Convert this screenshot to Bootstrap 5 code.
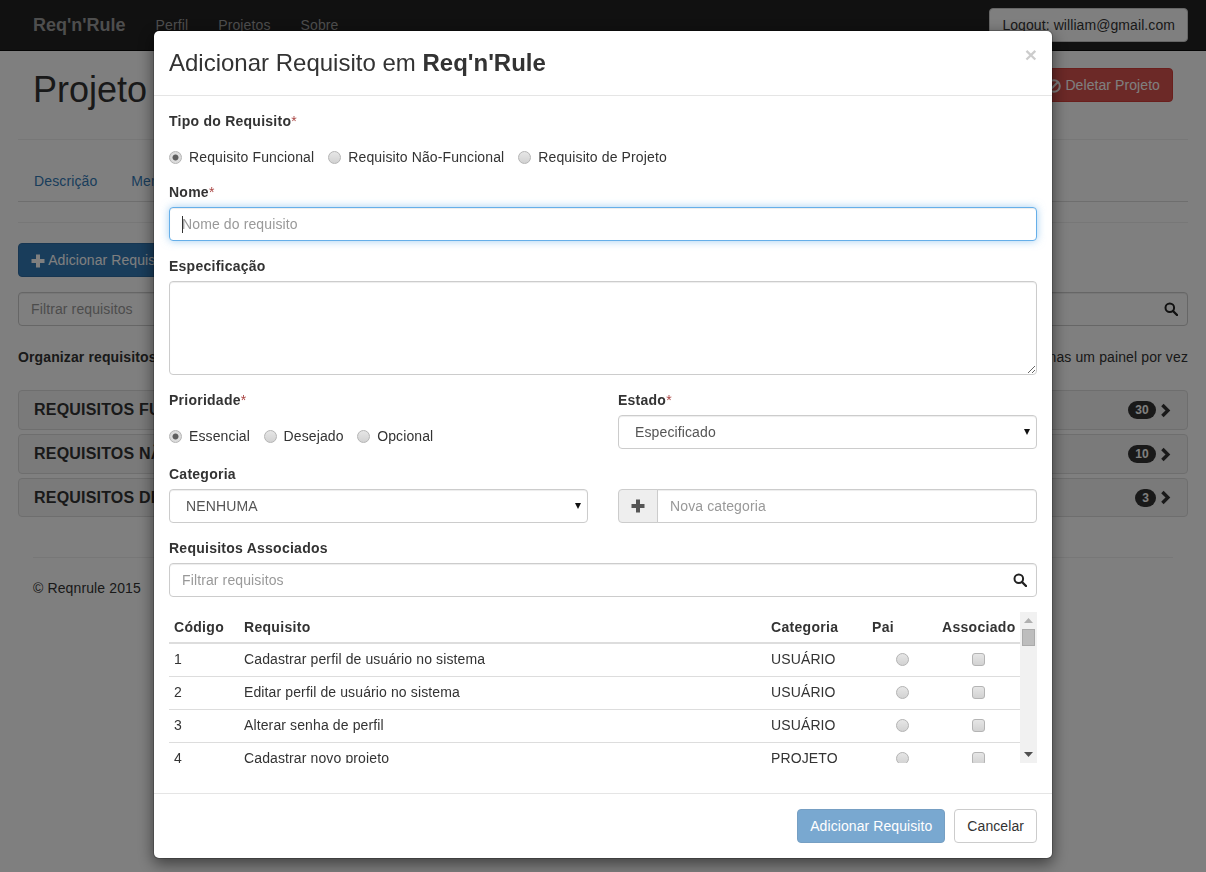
<!DOCTYPE html>
<html lang="pt-BR">
<head>
<meta charset="utf-8">
<title>Req'n'Rule</title>
<link href="https://cdn.jsdelivr.net/npm/bootstrap@5.3.0/dist/css/bootstrap.min.css" rel="stylesheet">
<style>
html,body{overflow:hidden}
body{font-family:"Liberation Sans",Arial,sans-serif;font-size:14px;line-height:20px;color:#333;background:#fff;letter-spacing:.12px}
.topbar{height:51px;background:#222;border-bottom:1px solid #080808;padding:0 18px 0 33px}
.brandname{font-size:18px;font-weight:700;color:#9d9d9d;margin-right:30px;text-decoration:none;letter-spacing:0}
.toplink{color:#9d9d9d;text-decoration:none;margin-right:30px}
.btn{font-size:14px;line-height:20px;padding:6px 12px;border-radius:4px;letter-spacing:.08px}
.btn-plain{background:#fff;border:1px solid #ccc;color:#333}
.btn-primary{--bs-btn-bg:#337ab7;--bs-btn-border-color:#2e6da4;--bs-btn-disabled-bg:#337ab7;--bs-btn-disabled-border-color:#2e6da4;--bs-btn-disabled-color:#fff;--bs-btn-disabled-opacity:.65}
.btn-danger{--bs-btn-bg:#d9534f;--bs-btn-border-color:#d43f3a}
.pagebox{padding:0 18px}
.titlerow{height:89px;padding:17px 15px 0;border-bottom:1px solid #eee}
.titlerow h1{font-size:36px;line-height:40px;margin:2px 0 0;font-weight:500;color:#333;letter-spacing:0}
.tabline{height:62px;border-bottom:1px solid #ddd;padding:0 16px 10px;gap:34px;color:#337ab7;align-items:flex-end}
.ruleline{height:21px;border-bottom:1px solid #eee}
.toolrow{margin-top:20px}
.searchwrap{position:relative}
.searchwrap .form-control{padding-right:36px}
.searchicon{position:absolute;top:10px;right:10px;width:14px;height:14px;z-index:6}
.form-control,.form-select{font-size:14px;line-height:20px;height:34px;border-radius:4px;border:1px solid #ccc;color:#555;padding:6px 12px;box-shadow:inset 0 1px 1px rgba(0,0,0,.075);letter-spacing:.12px}
.form-control::placeholder{color:#999;opacity:1}
.filterbox{margin-top:15px}
.orgrow{margin-top:21px;height:20px}
.panelstack{margin-top:23px;display:flex;flex-direction:column;gap:4px}
.painel{height:40px;background:#f5f5f5;border:1px solid #ddd;border-radius:4px;padding:0 15px;display:flex;align-items:center;justify-content:space-between}
.painel:last-child{height:39px}
.painel b{font-size:16px;line-height:18px;letter-spacing:.2px}
.contagem{background:#333;color:#fff;font-size:12px;font-weight:700;line-height:12px;padding:3px 7px;border-radius:10px;margin-right:4px;letter-spacing:.2px}
.rodape{margin:40px 15px 0;border-top:1px solid #eee;padding-top:20px}
.modal-dialog{max-width:900px;margin:30px auto 0}
.modal-content{border-radius:6px;border:1px solid rgba(0,0,0,.2);box-shadow:0 5px 15px rgba(0,0,0,.5);height:829px}
.modal-header{height:65px;padding:16px 15px 0;border-bottom:1px solid #e5e5e5;align-items:flex-start;display:block;position:relative}
.modal-title{font-size:24px;line-height:32px;font-weight:500;color:#333;letter-spacing:0}
.modal-title b{font-weight:700}
.fecha{position:absolute;right:15px;top:12px;font-size:21px;font-weight:700;line-height:24px;color:#000;opacity:.2;background:none;border:0;padding:0}
.modal-body{padding:15px 15px 0;flex:none;height:697px}
.rotulo{display:block;font-weight:700;margin:0;height:20px;letter-spacing:.25px}
.rotulo i{font-style:normal;font-weight:400;color:#a94442;letter-spacing:0}
.radiolinha{display:flex;height:20px;align-items:center;margin-top:16px;gap:14px}
.radiolinha label{display:flex;align-items:center;gap:7px;margin:0;color:#333}
.gbox{appearance:none;-webkit-appearance:none;display:block;width:13px;height:13px;margin:0;flex:none;border:1px solid #b4b4b4;border-radius:50%;background:linear-gradient(#e6e6e6,#d2d2d2);box-shadow:0 1px 0 rgba(255,255,255,.8)}
.gbox:checked{background:radial-gradient(circle,#5e5e5e 0,#5e5e5e 2.6px,#dedede 3.4px,#d6d6d6 100%)}
.gbox.quad{border-radius:3px}
.nome{margin-top:15px}
.nome .form-control{margin-top:5px;border-color:#66afe9;box-shadow:inset 0 1px 1px rgba(0,0,0,.075),0 0 8px rgba(102,175,233,.6);background:linear-gradient(#333,#333) 12px center/1px 17px no-repeat #fff}
.espec{margin-top:15px}
.espec .form-control{margin-top:5px;height:94px;resize:vertical}
.grade{--bs-gutter-x:30px}
.form-select{padding:6px 24px 6px 16px;background-image:url("data:image/svg+xml,%3Csvg xmlns='http://www.w3.org/2000/svg' width='6' height='6'%3E%3Cpath d='M0 0h6L3 6z' fill='%23111'/%3E%3C/svg%3E");background-position:right 6px center;background-size:6px 6px}
.prio{margin-top:15px}
.prio .rotulo{margin-bottom:5px}
.prio .radiolinha{margin-top:16px;gap:13.5px}
.cat{margin-top:15px}
.cat .form-select{margin-top:5px}
.addgroup{margin-top:40px}
.addgroup .input-group-text{width:40px;height:34px;justify-content:center;padding:0;background:#eee;border:1px solid #ccc;border-radius:4px 0 0 4px}
.associados{margin-top:15px}
.associados .searchwrap{margin-top:5px}
.rolagem{margin-top:15px;height:151px;display:flex}
.tabclip{width:851px;height:151px;overflow:hidden;flex:none}
.barra{width:17px;height:151px;background:#f1f1f1;flex:none;display:flex;flex-direction:column;align-items:center}
.seta{height:17px;flex:none;display:flex;align-items:center;justify-content:center}
.polegar{width:13px;height:17px;background:#bdbdbd;flex:none;border:1px solid #aaa}
.vazio{flex:1}
.tabela{margin:0;table-layout:fixed;width:851px;--bs-table-color:#333;color:#333;font-size:14px}
.tabela th,.tabela td{padding:4px 5px 6px;line-height:22px;height:33px;vertical-align:middle;border-bottom:1px solid #ddd;border-top:0}
.tabela thead th{height:31px;padding:3px 5px 4px;border-bottom:2px solid #ddd;letter-spacing:.3px;white-space:nowrap}
.tabela .gbox{margin:0 auto}
.modal-footer{height:65px;padding:15px;border-top:1px solid #e5e5e5;gap:9px;flex-wrap:nowrap}
.modal-footer>*{margin:0}
</style>
</head>
<body>
<nav class="topbar d-flex align-items-center">
  <a class="brandname" href="#">Req'n'Rule</a>
  <a class="toplink" href="#">Perfil</a>
  <a class="toplink" href="#">Projetos</a>
  <a class="toplink" href="#">Sobre</a>
  <button class="btn btn-plain ms-auto" type="button">Logout: william@gmail.com</button>
</nav>
<main class="pagebox">
  <div class="titlerow d-flex justify-content-between align-items-start">
    <h1>Projeto</h1>
    <button class="btn btn-danger" type="button">
      <svg width="14" height="14" viewBox="0 0 14 14" class="me-1" aria-hidden="true"><circle cx="7" cy="7" r="5.800" fill="none" stroke="#fff" stroke-width="2"/><path d="M11 3L3 11" stroke="#fff" stroke-width="2"/></svg>Deletar Projeto
    </button>
  </div>
  <div class="tabline d-flex"><span>Descrição</span><span>Membros</span></div>
  <div class="ruleline"></div>
  <div class="toolrow">
    <button class="btn btn-primary" type="button">
      <svg width="14" height="14" viewBox="0 0 14 14" aria-hidden="true"><path d="M5 .5h4V5h4.500v4H9v4.500H5V9H.5V5H5z" fill="#fff"/></svg> Adicionar Requisito
    </button>
  </div>
  <div class="searchwrap filterbox">
    <input class="form-control" placeholder="Filtrar requisitos">
    <svg class="searchicon" viewBox="0 0 14 14" aria-hidden="true"><circle cx="5.800" cy="5.800" r="4.300" fill="none" stroke="#222" stroke-width="2"/><path d="M9 9l4 4" stroke="#222" stroke-width="2.400" stroke-linecap="round"/></svg>
  </div>
  <div class="orgrow d-flex justify-content-between"><b>Organizar requisitos</b><span>apenas um painel por vez</span></div>
  <div class="panelstack">
    <div class="painel"><b>REQUISITOS FUNCIONAIS</b><span class="d-flex align-items-center"><span class="contagem">30</span><svg width="12" height="15" viewBox="0 0 12 15" aria-hidden="true"><path d="M2.400 2L7.900 7.500 2.400 13" fill="none" stroke="#333" stroke-width="3.400"/></svg></span></div>
    <div class="painel"><b>REQUISITOS NÃO-FUNCIONAIS</b><span class="d-flex align-items-center"><span class="contagem">10</span><svg width="12" height="15" viewBox="0 0 12 15" aria-hidden="true"><path d="M2.400 2L7.900 7.500 2.400 13" fill="none" stroke="#333" stroke-width="3.400"/></svg></span></div>
    <div class="painel"><b>REQUISITOS DE PROJETO</b><span class="d-flex align-items-center"><span class="contagem">3</span><svg width="12" height="15" viewBox="0 0 12 15" aria-hidden="true"><path d="M2.400 2L7.900 7.500 2.400 13" fill="none" stroke="#333" stroke-width="3.400"/></svg></span></div>
  </div>
  <footer class="rodape">© Reqnrule 2015</footer>
</main>

<div class="modal-backdrop fade show"></div>
<div class="modal d-block" tabindex="-1">
  <div class="modal-dialog">
    <div class="modal-content">
      <div class="modal-header">
        <h4 class="modal-title m-0">Adicionar Requisito em <b>Req'n'Rule</b></h4>
        <button class="fecha" type="button" aria-label="Fechar">×</button>
      </div>
      <div class="modal-body">
        <label class="rotulo">Tipo do Requisito<i>*</i></label>
        <div class="radiolinha">
          <label><input class="gbox" type="radio" name="tipo" checked>Requisito Funcional</label>
          <label><input class="gbox" type="radio" name="tipo">Requisito Não-Funcional</label>
          <label><input class="gbox" type="radio" name="tipo">Requisito de Projeto</label>
        </div>
        <div class="nome">
          <label class="rotulo">Nome<i>*</i></label>
          <input class="form-control" placeholder="Nome do requisito">
        </div>
        <div class="espec">
          <label class="rotulo">Especificação</label>
          <textarea class="form-control"></textarea>
        </div>
        <div class="row grade">
          <div class="col-6">
            <div class="prio">
              <label class="rotulo">Prioridade<i>*</i></label>
              <div class="radiolinha">
                <label><input class="gbox" type="radio" name="prio" checked>Essencial</label>
                <label><input class="gbox" type="radio" name="prio">Desejado</label>
                <label><input class="gbox" type="radio" name="prio">Opcional</label>
              </div>
            </div>
          </div>
          <div class="col-6">
            <div class="prio">
              <label class="rotulo">Estado<i>*</i></label>
              <select class="form-select"><option>Especificado</option></select>
            </div>
          </div>
        </div>
        <div class="row grade">
          <div class="col-6">
            <div class="cat">
              <label class="rotulo">Categoria</label>
              <select class="form-select"><option>NENHUMA</option></select>
            </div>
          </div>
          <div class="col-6">
            <div class="input-group addgroup">
              <span class="input-group-text"><svg width="14" height="14" viewBox="0 0 14 14" aria-hidden="true"><path d="M5 .5h4V5h4.500v4H9v4.500H5V9H.5V5H5z" fill="#555"/></svg></span>
              <input class="form-control" placeholder="Nova categoria">
            </div>
          </div>
        </div>
        <div class="associados">
          <label class="rotulo">Requisitos Associados</label>
          <div class="searchwrap">
            <input class="form-control" placeholder="Filtrar requisitos">
            <svg class="searchicon" viewBox="0 0 14 14" aria-hidden="true"><circle cx="5.800" cy="5.800" r="4.300" fill="none" stroke="#222" stroke-width="2"/><path d="M9 9l4 4" stroke="#222" stroke-width="2.400" stroke-linecap="round"/></svg>
          </div>
        </div>
        <div class="rolagem">
          <div class="tabclip">
            <table class="table tabela">
              <colgroup><col style="width:70px"><col style="width:527px"><col style="width:101px"><col style="width:70px"><col style="width:83px"></colgroup>
              <thead><tr><th>Código</th><th>Requisito</th><th>Categoria</th><th>Pai</th><th>Associado</th></tr></thead>
              <tbody>
                <tr><td>1</td><td>Cadastrar perfil de usuário no sistema</td><td>USUÁRIO</td><td><input class="gbox" type="radio" name="pai"></td><td><input class="gbox quad" type="checkbox"></td></tr>
                <tr><td>2</td><td>Editar perfil de usuário no sistema</td><td>USUÁRIO</td><td><input class="gbox" type="radio" name="pai"></td><td><input class="gbox quad" type="checkbox"></td></tr>
                <tr><td>3</td><td>Alterar senha de perfil</td><td>USUÁRIO</td><td><input class="gbox" type="radio" name="pai"></td><td><input class="gbox quad" type="checkbox"></td></tr>
                <tr><td>4</td><td>Cadastrar novo projeto</td><td>PROJETO</td><td><input class="gbox" type="radio" name="pai"></td><td><input class="gbox quad" type="checkbox"></td></tr>
              </tbody>
            </table>
          </div>
          <div class="barra" aria-hidden="true">
            <div class="seta"><svg width="9" height="5" viewBox="0 0 9 5"><path d="M0 5h9L4.500 0z" fill="#b0b0b0"/></svg></div>
            <div class="polegar"></div>
            <div class="vazio"></div>
            <div class="seta"><svg width="9" height="5" viewBox="0 0 9 5"><path d="M0 0h9L4.500 5z" fill="#505050"/></svg></div>
          </div>
        </div>
      </div>
      <div class="modal-footer">
        <button class="btn btn-primary" type="button" disabled>Adicionar Requisito</button>
        <button class="btn btn-plain" type="button">Cancelar</button>
      </div>
    </div>
  </div>
</div>
<script src="https://cdn.jsdelivr.net/npm/bootstrap@5.3.0/dist/js/bootstrap.bundle.min.js"></script>
</body>
</html>
